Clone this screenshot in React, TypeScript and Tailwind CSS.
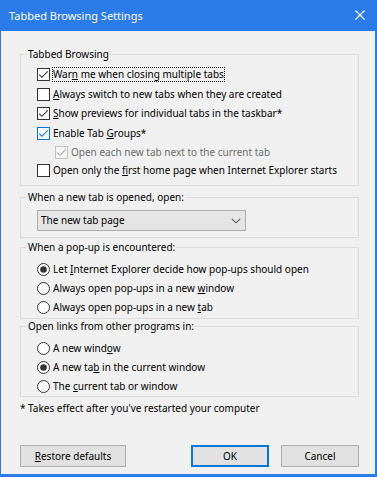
import React from 'react';

// --- small win10 controls ---
function CheckBox({ checked, hover, disabled }: { checked?: boolean; hover?: boolean; disabled?: boolean }) {
  const border = disabled ? '#c2c2c2' : hover ? '#0078d7' : '#333333';
  const mark = disabled ? '#a6a6a6' : hover ? '#0078d7' : '#333333';
  return (
    <svg width="13" height="13" viewBox="0 0 13 13" className="shrink-0">
      <rect x="0.5" y="0.5" width="12" height="12" fill={disabled ? '#f6f6f6' : '#ffffff'} stroke={border} />
      {checked && <polyline points="2.2,6.6 4.9,9.3 10.8,3.4" fill="none" stroke={mark} strokeWidth="1.1" />}
    </svg>
  );
}

function RadioDot({ checked }: { checked?: boolean }) {
  return (
    <svg width="13" height="13" viewBox="0 0 13 13" className="shrink-0">
      <circle cx="6.5" cy="6.5" r="6" fill="#ffffff" stroke="#333333" />
      {checked && <circle cx="6.5" cy="6.5" r="3.3" fill="#333333" />}
    </svg>
  );
}

function Group({ title, className, children }: { title: string; className?: string; children: React.ReactNode }) {
  return (
    <fieldset className={`border border-[#dcdcdc] m-0 p-0 min-w-0 ${className ?? ''}`}>
      <legend className="ml-[6px] px-[1px] leading-[15px] text-black">{title}</legend>
      {children}
    </fieldset>
  );
}

function CheckRow({ h, indent, children, ...box }: { h: string; indent?: boolean; children: React.ReactNode; checked?: boolean; hover?: boolean; disabled?: boolean }) {
  return (
    <div className={`flex items-center gap-[3px] ${h} ${indent ? 'pl-[34px]' : 'pl-[16px]'}`}>
      <CheckBox {...box} />
      <span className={box.disabled ? 'text-[#6d6d6d]' : 'text-black'}>{children}</span>
    </div>
  );
}

function RadioRow({ h, checked, children }: { h: string; checked?: boolean; children: React.ReactNode }) {
  return (
    <div className={`flex items-center gap-[3px] pl-[16px] ${h}`}>
      <RadioDot checked={checked} />
      <span className="text-black">{children}</span>
    </div>
  );
}

export default function App() {
  return (
    <div className="w-[377px] h-[477px] bg-[#2b7be9] flex flex-col text-[10px] leading-[15px]" style={{ fontFamily: '"Noto Sans", "Liberation Sans", sans-serif' }}>
      {/* title bar */}
      <div className="h-[31px] shrink-0 flex items-center justify-between pl-[9px] pr-[12px] text-white text-[11px]">
        <span className="-mt-[1px]">Tabbed Browsing Settings</span>
        <svg width="10" height="10" viewBox="0 0 10 10" className="-mt-[1px]">
          <path d="M0.5 0.5L9.5 9.5M9.5 0.5L0.5 9.5" stroke="#ffffff" strokeWidth="1.1" />
        </svg>
      </div>

      {/* body */}
      <div className="flex-1 ml-[1px] mr-[2px] mb-[3px] bg-[#f0f0f0] pl-[19px] pr-[16px] pt-[16px] flex flex-col">
        <Group title="Tabbed Browsing">
          <div className="pt-[3px] pb-[5px]">
            <div className="flex items-center gap-[3px] h-[19px] pl-[16px]">
              <CheckBox checked />
              <span className="outline outline-1 outline-dotted outline-black -outline-offset-1 px-[1px] -ml-[1px] text-black">
                War<u>n</u> me when closing multiple tabs
              </span>
            </div>
            <CheckRow h="h-[20px]"><u>A</u>lways switch to new tabs when they are created</CheckRow>
            <CheckRow h="h-[19px]" checked><u>S</u>how previews for individual tabs in the taskbar*</CheckRow>
            <CheckRow h="h-[20px]" checked hover>Enable Tab <u>G</u>roups*</CheckRow>
            <CheckRow h="h-[18px]" checked disabled indent>Open each new tab next to the current tab</CheckRow>
            <CheckRow h="h-[19px]">Open only the <u>f</u>irst home page when Internet Explorer starts</CheckRow>
          </div>
        </Group>

        <Group title="When a new tab is opened, open:" className="mt-[4px]">
          <div className="pt-[5px] pb-[6px] pl-[16px]">
            <div className="w-[209px] h-[21px] bg-[#e5e5e5] border border-[#adadad] flex items-center justify-between pl-[3px] pr-[4px]">
              <span className="text-black">The new tab page</span>
              <svg width="10" height="6" viewBox="0 0 10 6">
                <polyline points="0.8,0.8 5,4.8 9.2,0.8" fill="none" stroke="#555555" strokeWidth="1.1" />
              </svg>
            </div>
          </div>
        </Group>

        <Group title="When a pop-up is encountered:" className="mt-[2px]">
          <div className="pt-[4px] pb-[1px]">
            <RadioRow h="h-[20px]" checked>Let <u>I</u>nternet Explorer decide how pop-ups should open</RadioRow>
            <RadioRow h="h-[19px]">Always open pop-ups in a new <u>w</u>indow</RadioRow>
            <RadioRow h="h-[19px]">Always open pop-ups in a new <u>t</u>ab</RadioRow>
          </div>
        </Group>

        <Group title="Open links from other programs in:">
          <div className="pt-[5px]">
            <RadioRow h="h-[19px]">A new wind<u>o</u>w</RadioRow>
            <RadioRow h="h-[19px]" checked>A new ta<u>b</u> in the current window</RadioRow>
            <RadioRow h="h-[19px]">The <u>c</u>urrent tab or window</RadioRow>
          </div>
        </Group>

        <div className="mt-[4px] text-black">* Takes effect after you've restarted your computer</div>

        <div className="mt-auto mb-[7px] flex justify-between">
          <button className="w-[106px] h-[22px] bg-[#e1e1e1] border border-[#adadad] text-black">
            <u>R</u>estore defaults
          </button>
          <div className="flex gap-[12px]">
            <button className="w-[78px] h-[22px] bg-[#e1e1e1] border-2 border-[#0078d7] text-black">OK</button>
            <button className="w-[78px] h-[22px] bg-[#e1e1e1] border border-[#adadad] text-black">Cancel</button>
          </div>
        </div>
      </div>
    </div>
  );
}
